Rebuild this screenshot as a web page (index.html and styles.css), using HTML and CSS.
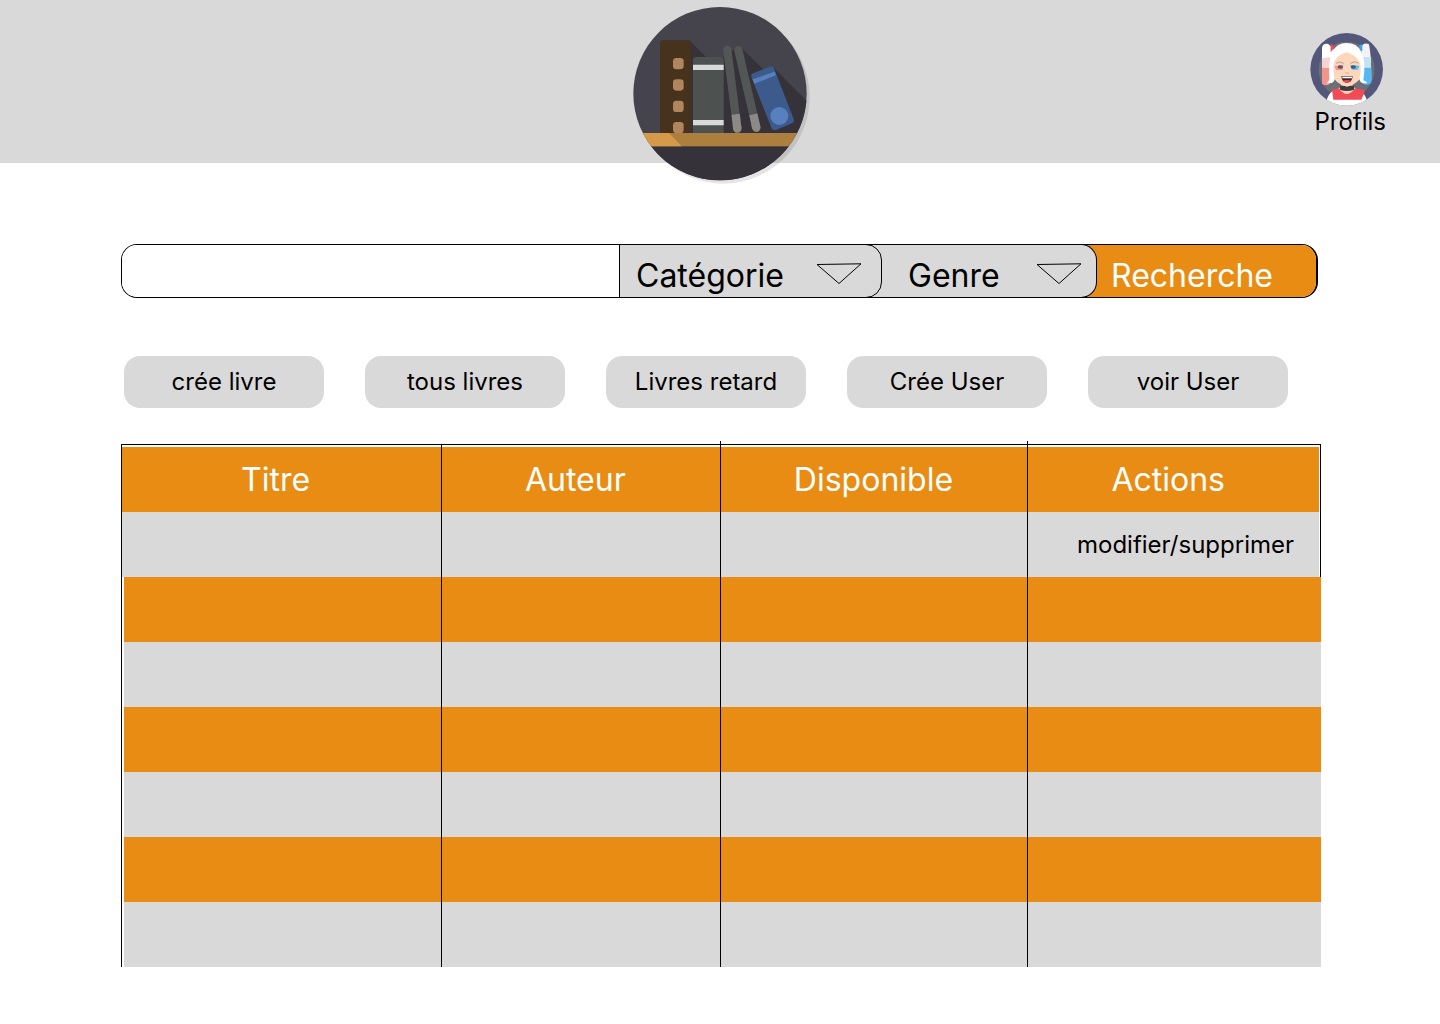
FILE: index.html
```html
<!DOCTYPE html>
<html lang="fr">
<head>
<meta charset="utf-8">
<meta name="viewport" content="width=device-width, initial-scale=1">
<title>Bibliothèque</title>
<link rel="stylesheet" href="styles.css">
</head>
<body>
<header class="header">
  <a class="logo" href="#" aria-label="Accueil">
    <svg width="190" height="190" viewBox="0 0 570 570" aria-hidden="true">
      <defs><clipPath id="disc"><circle cx="285" cy="281" r="260"/></clipPath></defs>
      <circle cx="294" cy="291" r="260" fill="#000" fill-opacity=".1"/>
      <g clip-path="url(#disc)">
        <rect width="570" height="570" fill="#45434c"/>
        <path d="M194 122 L244 172 H296 L340 138 L352 146 L420 214 L445 202 L570 327 V400 H194Z" fill="#36323a"/>
        <rect y="437" width="570" height="133" fill="#36323a"/>
        <rect y="399" width="570" height="40" fill="#ad7f3e"/>
        <path d="M0 399H132L170 439H0Z" fill="#d49a4a"/>
        <path d="M105 129q0-8 8-8h77q8 0 8 8v270h-93z" fill="#46321d"/>
        <g fill="#b1865c">
          <rect x="144" y="174" width="32" height="34" rx="10"/>
          <rect x="144" y="238" width="32" height="34" rx="10"/>
          <rect x="144" y="302" width="32" height="34" rx="10"/>
          <rect x="144" y="366" width="32" height="33" rx="10"/>
        </g>
        <path d="M204 181q0-10 10-10h72q10 0 10 10v218h-92z" fill="#4d5251"/>
        <path d="M204 194h92v16h-92zM204 360h92v16h-92z" fill="#d9d9d9"/>
        <g stroke-width="25" fill="none">
          <g stroke-linecap="round">
            <path d="M307 150L337 386" stroke="#525654"/>
            <path d="M340 150L394 383" stroke="#525654"/>
            <path d="M336 378L337 386" stroke="#8d8987"/>
            <path d="M392 376L394 383" stroke="#8d8987"/>
          </g>
          <path d="M332 343L337 386" stroke="#8d8987"/>
          <path d="M385 343L394 383" stroke="#8d8987"/>
        </g>
        <path d="M385 220L434 200Q443 196 447 205L506 357Q509 366 501 370L453 390Q444 393 440 385L379 231Q376 223 385 220Z" fill="#3d5a8c"/>
        <path d="M383 238L449 215L453 226L388 251Z" fill="#587fbe"/>
        <circle cx="463" cy="348" r="27" fill="#587fbe"/>
      </g>
    </svg>
  </a>
  <a class="profile" href="#">
    <svg width="74" height="74" viewBox="0 0 222 222" aria-hidden="true">
      <defs><clipPath id="face"><circle cx="110" cy="109" r="109"/></clipPath></defs>
      <g clip-path="url(#face)">
        <rect width="222" height="222" fill="#53587a"/>
        <circle cx="110" cy="110" r="84" fill="#6c6f78"/>
        <path d="M36 45Q38 30 55 33L72 50L60 148Q56 162 36 152Z" fill="#fff"/>
        <path d="M36 76L60 72L60 104H36Z" fill="#f5d5d4"/>
        <path d="M36 104H62L58 152Q48 160 36 152Z" fill="#f5938d"/>
        <path d="M62 32Q72 34 72 45L62 58Z" fill="#ef4753"/>
        <path d="M154 45Q158 28 176 33Q183 50 184 140Q182 160 160 150Z" fill="#f3f3f5"/>
        <path d="M158 72H183V104H158Z" fill="#c5e2f3"/>
        <path d="M158 104H184V146Q178 160 158 152Z" fill="#54b8f4"/>
        <path d="M148 36L157 34V54L148 48Z" fill="#37a5ef"/>
        <path d="M94 145H128V180H94Z" fill="#eac49e"/>
        <path d="M48 222Q48 176 84 168H136Q172 178 174 222Z" fill="#fff"/>
        <path d="M66 170L88 165Q110 200 134 165L166 172L154 200H70Z" fill="#f14b58"/>
        <path d="M86 166Q110 198 136 166L128 160H96Z" fill="#f7d0ac"/>
        <path d="M90 158H132V170Q110 178 90 170Z" fill="#3f3b42"/>
        <path d="M67 75Q110 22 155 75V125Q148 151 111 161Q74 151 67 125Z" fill="#fcd7bb"/>
        <path d="M58 140Q50 30 109 30Q176 30 160 142Q170 146 172 150Q150 154 148 138Q158 94 144 80Q132 64 110 58Q88 64 76 80Q66 94 74 138Q72 154 50 150Q56 146 58 140Z" fill="#fff"/>
        <path d="M74 99L100 95L98 111H78Z" fill="#f59694"/>
        <path d="M120 96L148 98L144 110L126 110Z" fill="#62bdec"/>
        <ellipse cx="91" cy="102" rx="8" ry="5" fill="#5b526d"/>
        <ellipse cx="130" cy="102" rx="8" ry="5" fill="#355e83"/>
        <path d="M78 91Q88 83 101 91M121 91Q134 82 145 90" fill="none" stroke="#b99f91" stroke-width="3"/>
        <path d="M106 119Q111 123 117 119" fill="none" stroke="#e0a68b" stroke-width="3"/>
        <path d="M94 130H128Q126 149 111 149Q96 149 94 130Z" fill="#3b2832"/>
        <path d="M97 131H126V136H97Z" fill="#fff"/>
        <path d="M97 144Q110 138 124 144Q111 155 97 144Z" fill="#ef4753"/>
      </g>
    </svg>
    <span>Profils</span>
  </a>
</header>

<main class="main">
  <form class="search">
    <input class="search-input" type="search" aria-label="Rechercher un livre">
    <div class="filter filter-category">
      <select class="filter-select" aria-label="Catégorie"><option>Catégorie</option></select>
      <svg class="arrow" width="46" height="22" viewBox="0 0 46 22" aria-hidden="true"><path d="M1 1.500L45 .8L23 20.500Z"/></svg>
    </div>
    <div class="filter filter-genre">
      <select class="filter-select" aria-label="Genre"><option>Genre</option></select>
      <svg class="arrow" width="46" height="22" viewBox="0 0 46 22" aria-hidden="true"><path d="M1 1.500L45 .8L23 20.500Z"/></svg>
    </div>
    <button class="search-button" type="submit">Recherche</button>
  </form>

  <nav class="actions" aria-label="Gestion">
    <button class="action" type="button">crée livre</button>
    <button class="action" type="button">tous livres</button>
    <button class="action" type="button">Livres retard</button>
    <button class="action" type="button">Crée User</button>
    <button class="action" type="button">voir User</button>
  </nav>

  <div class="table-frame">
    <table class="books">
      <colgroup><col class="col-title"><col class="col-author"><col class="col-available"><col></colgroup>
      <thead>
        <tr><th scope="col">Titre</th><th scope="col">Auteur</th><th class="th-available" scope="col">Disponible</th><th scope="col">Actions</th></tr>
      </thead>
      <tbody>
        <tr class="first-row"><td></td><td></td><td></td><td>modifier/supprimer</td></tr>
        <tr><td></td><td></td><td></td><td></td></tr>
        <tr><td></td><td></td><td></td><td></td></tr>
        <tr><td></td><td></td><td></td><td></td></tr>
        <tr><td></td><td></td><td></td><td></td></tr>
        <tr><td></td><td></td><td></td><td></td></tr>
        <tr><td></td><td></td><td></td><td></td></tr>
      </tbody>
    </table>
  </div>
</main>
</body>
</html>
```
FILE: styles.css
```css
:root {
  --grey: #d9d9d9;
  --orange: #e98c13;
}

* {
  box-sizing: border-box;
}

body {
  margin: 0;
  background: #fff;
  color: #000;
  font-family: Inter, "Liberation Sans", sans-serif;
  font-size: 24px;
  line-height: 30px;
}

button,
input,
select {
  margin: 0;
  border: 0;
  color: inherit;
  font: inherit;
}

.header {
  display: grid;
  grid-template-columns: 1fr auto 1fr;
  align-items: start;
  height: 163px;
  background: var(--grey);
}

.logo {
  grid-column: 2;
}

.logo svg,
.profile svg {
  display: block;
}

.profile {
  display: flex;
  flex-direction: column;
  justify-self: end;
  padding: 33px 54px 0 0;
  color: inherit;
  text-decoration: none;
}

.profile span {
  padding-left: 4px;
}

.main {
  padding: 81px 119px 57px 121px;
}

.search {
  display: grid;
  grid-template-columns: 497fr 263fr 215fr 219fr;
  height: 54px;
  margin-right: 3px;
  overflow: hidden;
  border: 1px solid #000;
  border-right-width: 2px;
  border-radius: 16px;
  font-size: 32px;
}

.search-input {
  min-width: 0;
  padding: 0 16px;
  background: #fff;
  outline: 0;
}

.filter {
  position: relative;
  z-index: 1;
  margin-block: -1px;
  border: 1px solid #000;
  border-left: 0;
  border-radius: 0 16px 16px 0;
  background: var(--grey);
}

.filter-category {
  z-index: 2;
  border-left: 1px solid #000;
}

.filter-genre,
.search-button {
  margin-left: -20px;
}

.filter-select {
  width: 100%;
  height: 52px;
  padding: 10px 16px 0;
  appearance: none;
  background: transparent;
  line-height: 42px;
}

.filter-genre .filter-select {
  padding-left: 46px;
}

.arrow {
  position: absolute;
  top: 18px;
  right: 19px;
  fill: none;
  stroke: #000;
  pointer-events: none;
}

.filter-genre .arrow {
  right: 14px;
}

.search-button {
  padding: 10px 0 0 34px;
  background: var(--orange);
  color: #fff;
  text-align: left;
}

.actions {
  display: grid;
  grid-template-columns: repeat(5, 1fr);
  gap: 41px;
  margin: 58px 33px 36px 3px;
}

.action {
  height: 52px;
  padding: 0;
  border-radius: 16px;
  background: var(--grey);
}

.table-frame {
  border-top: 1px solid #000;
  border-left: 1px solid #000;
}

.books {
  width: 100%;
  border-spacing: 0;
  table-layout: fixed;
}

.col-title {
  width: 26.7%;
}

.col-author {
  width: 23.3%;
}

.col-available {
  width: 25.6%;
}

.books th,
.books td {
  height: 65px;
  padding: 0;
  border-right: 1px solid #000;
  background: var(--orange);
}

.books th {
  position: relative;
  height: 67px;
  padding: 2px 12px 0 0;
  box-shadow: inset 0 2px #fff;
  color: #fff;
  font-size: 32px;
  font-weight: 400;
}

.books .th-available {
  padding-right: 2px;
}

.books tbody tr:nth-child(odd) td {
  background: var(--grey);
}

.books tbody td:first-child {
  border-left: 2px solid #fff;
}

.books tbody td:last-child {
  border-right: 0;
}

.books .first-row td:first-child {
  border-left: 0;
}

.books .first-row td:last-child {
  padding-right: 26px;
  border-right: 1px solid #000;
  box-shadow: inset -1px 0 #fff;
  text-align: right;
}

.books th:last-child {
  box-shadow: inset 0 2px #fff, inset -1px 0 #fff;
}

/* The two inner rules rise slightly above the frame. */
.books th:nth-child(2)::after,
.books th:nth-child(3)::after {
  content: "";
  position: absolute;
  top: -4px;
  right: -1px;
  width: 1px;
  height: 4px;
  background: #000;
}
```
